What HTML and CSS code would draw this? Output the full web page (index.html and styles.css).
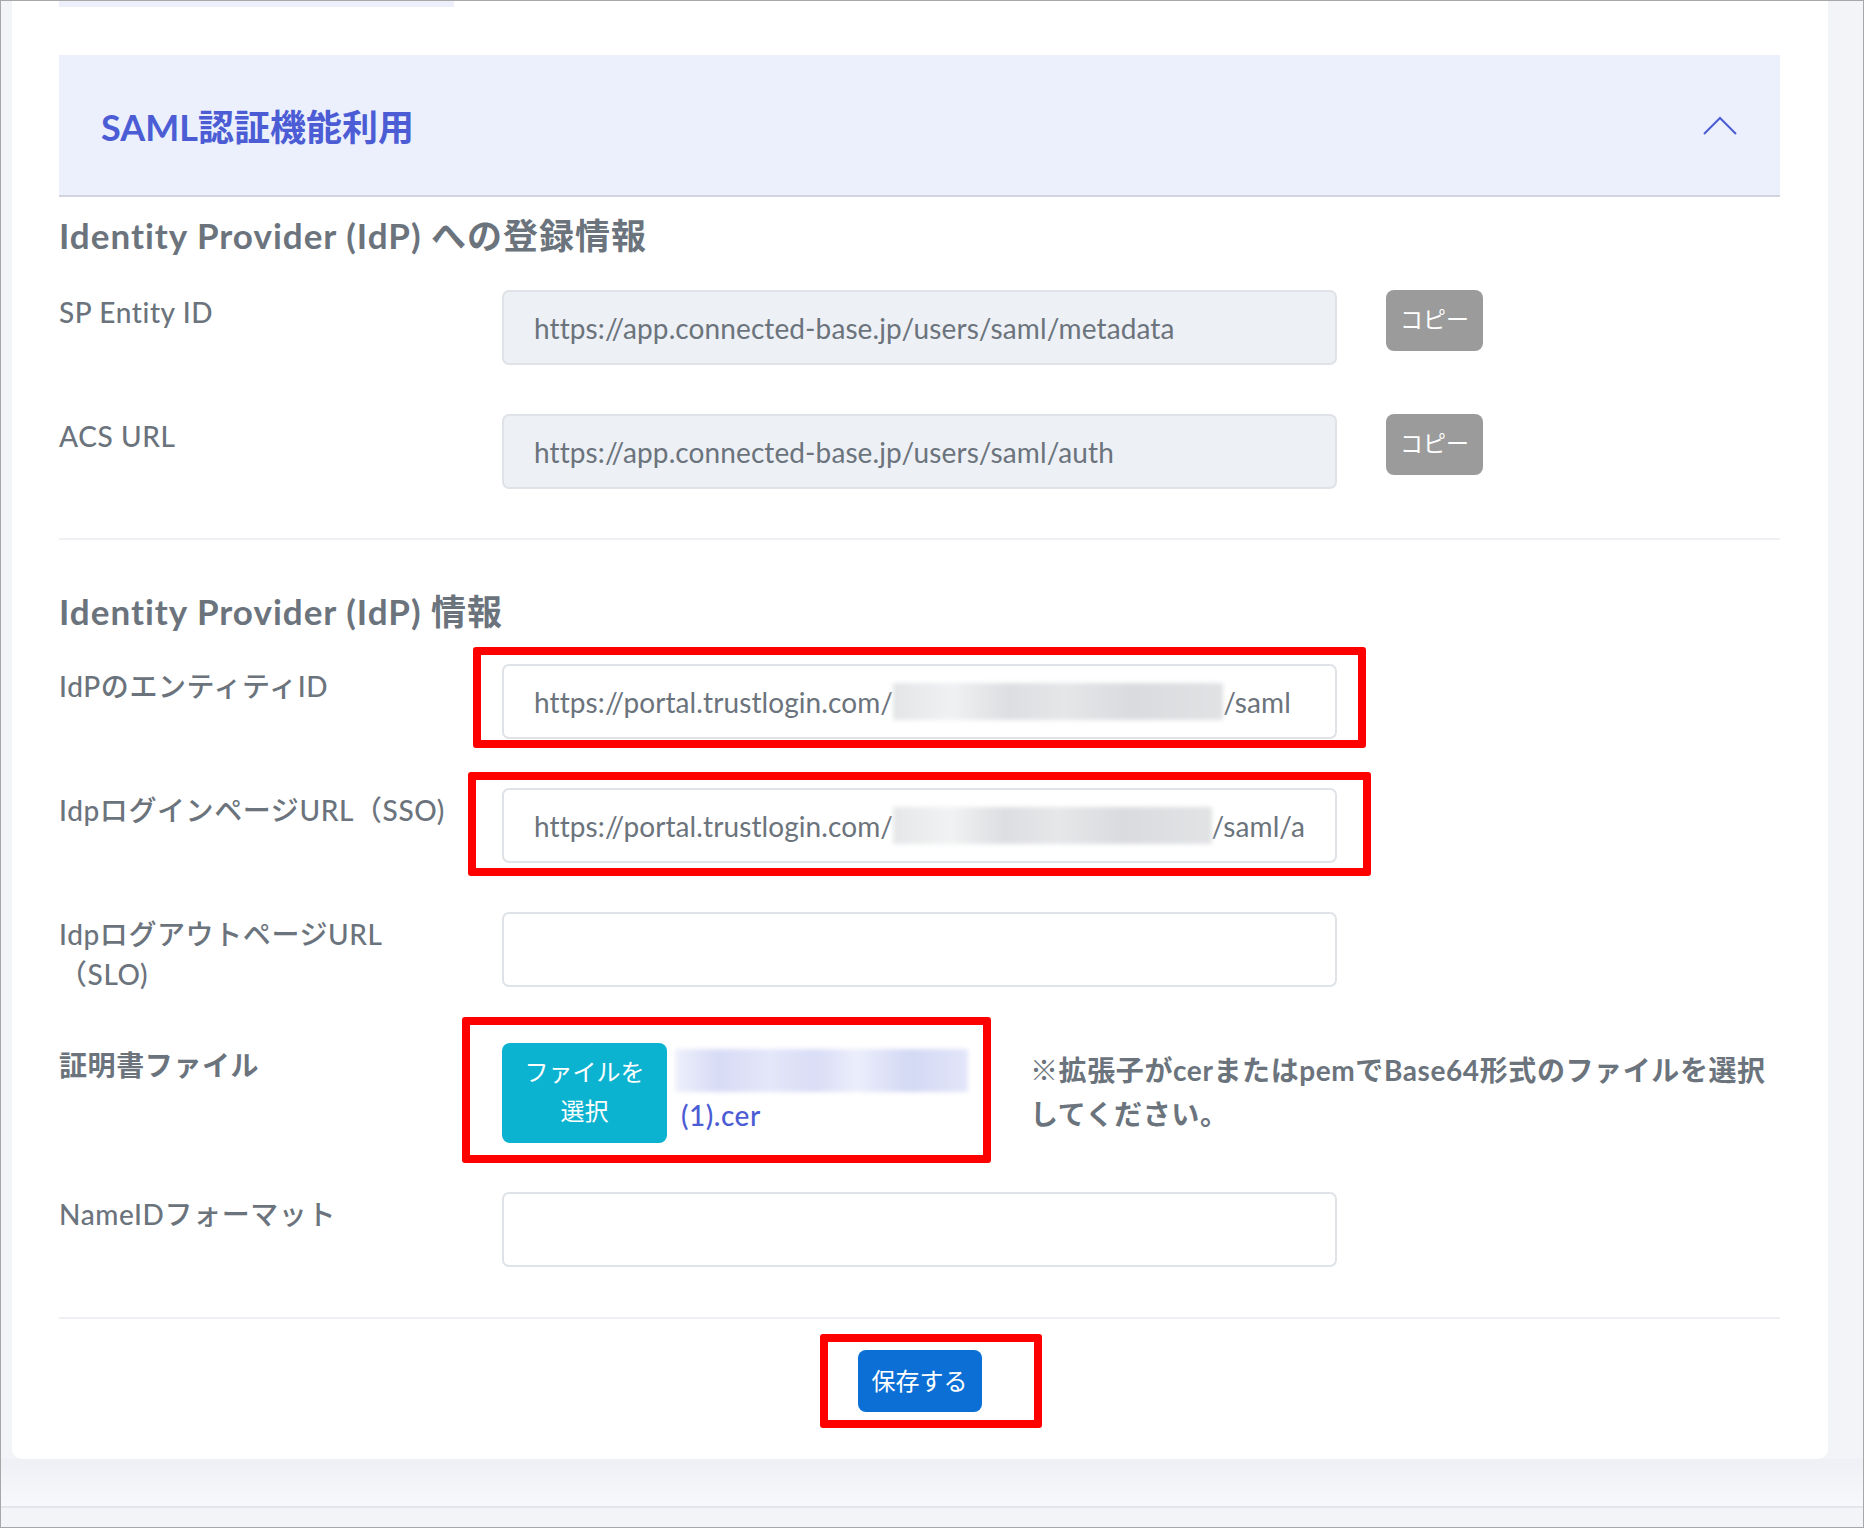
FILE: index.html
```html
<!DOCTYPE html>
<html lang="ja">
<head>
  <meta charset="UTF-8">
  <meta name="viewport" content="width=device-width, initial-scale=1.0">
  <title>SAML認証設定</title>
  <link rel="stylesheet" href="styles.css">
</head>
<body>
  <div class="window">
    <div class="card">
      <div class="tab-strip"></div>

      <!-- SAML設定パネル -->
      <div class="panel-header">
        <h2>SAML認証機能利用</h2>
        <svg class="chevron" width="36" height="20" viewBox="0 0 36 20">
          <polyline points="2,18 18,2 34,18" fill="none" stroke="#4b5cd5" stroke-width="2"/>
        </svg>
      </div>

      <h3 class="section-title">Identity Provider (IdP) への登録情報</h3>

      <div class="form-row">
        <label>SP Entity ID</label>
        <div class="field readonly">https://app.connected-base.jp/users/saml/metadata</div>
        <button class="btn-copy">コピー</button>
      </div>

      <div class="form-row">
        <label>ACS URL</label>
        <div class="field readonly">https://app.connected-base.jp/users/saml/auth</div>
        <button class="btn-copy">コピー</button>
      </div>

      <hr>

      <h3 class="section-title second">Identity Provider (IdP) 情報</h3>

      <div class="form-row">
        <label>IdPのエンティティID</label>
        <div class="field-wrap">
          <div class="field">https://portal.trustlogin.com/<span class="masked m1"></span>/saml</div>
          <div class="mark mark-entity"></div>
        </div>
      </div>

      <div class="form-row">
        <label>IdpログインページURL（SSO)</label>
        <div class="field-wrap">
          <div class="field">https://portal.trustlogin.com/<span class="masked m2"></span>/saml/a</div>
          <div class="mark mark-sso"></div>
        </div>
      </div>

      <div class="form-row">
        <label>IdpログアウトページURL（SLO)</label>
        <div class="field"></div>
      </div>

      <div class="form-row cert-row">
        <label class="strong">証明書ファイル</label>
        <div class="file-wrap">
          <button class="btn-file">ファイルを選択</button>
          <div class="file-name"><span class="masked m3"></span>(1).cer</div>
          <div class="mark mark-file"></div>
        </div>
        <p class="help">※拡張子がcerまたはpemでBase64形式のファイルを選択してください。</p>
      </div>

      <div class="form-row">
        <label>NameIDフォーマット</label>
        <div class="field"></div>
      </div>

      <hr class="bottom">

      <div class="actions">
        <div class="save-wrap">
          <button class="btn-save">保存する</button>
          <div class="mark mark-save"></div>
        </div>
      </div>
    </div>

    <div class="page-footer"></div>
  </div>
</body>
</html>
```

FILE: styles.css
```css
body {
  margin: 0;
  font-family: "Lato", "Noto Sans CJK JP", sans-serif;
  color: #6b737c;
}

.window {
  width: 1864px;
  height: 1528px;
  box-sizing: border-box;
  border: 1px solid #a7a7a7;
  background: #f3f4f8;
  overflow: hidden;
}

.card {
  margin-left: 11px;
  width: 1816px;
  box-sizing: border-box;
  padding: 0 48px 47px 47px;
  background: #fff;
  border-radius: 0 0 10px 10px;
}

.tab-strip {
  width: 395px;
  height: 6px;
  background: #edf0fb;
}

.panel-header {
  margin-top: 48px;
  height: 140px;
  padding: 0 42px;
  display: flex;
  align-items: center;
  justify-content: space-between;
  background: #ecf0fc;
  border-bottom: 2px solid #d2d3df;
}

.panel-header h2 {
  margin: 0;
  font-size: 36px;
  font-weight: 700;
  color: #4b5cd5;
}

.chevron {
  margin-top: 2px;
}

.section-title {
  margin: 18px 0 35px;
  font-size: 35px;
  line-height: 40px;
  letter-spacing: 1px;
  font-weight: 700;
  color: #6b737c;
}

.section-title.second {
  margin-top: 51px;
  margin-bottom: 33px;
}

.form-row {
  display: grid;
  grid-template-columns: 405px 835px 97px;
  column-gap: 38px;
  align-items: start;
  margin-bottom: 49px;
}

.form-row > :nth-child(3) {
  margin-left: 11px;
}

.form-row label {
  padding-top: 2px;
  font-size: 28px;
  line-height: 40px;
  letter-spacing: 0.6px;
  font-weight: 500;
}

.form-row label.strong {
  font-weight: 700;
}

.field {
  height: 75px;
  box-sizing: border-box;
  padding: 0 30px;
  display: flex;
  align-items: center;
  font-size: 28px;
  letter-spacing: 0.1px;
  white-space: nowrap;
  overflow: hidden;
  background: #fff;
  border: 2px solid #dfe2e7;
  border-radius: 7px;
}

.field.readonly {
  background: #edf0f5;
}

.field-wrap,
.file-wrap,
.save-wrap {
  position: relative;
}

.masked {
  display: inline-block;
  height: 37px;
  filter: blur(2px);
}

.m1 {
  width: 330px;
  background: linear-gradient(90deg, #e4e5e7, #f0f1f2 18%, #dddee1 35%, #e5e6e8 52%, #dadbde 72%, #e1e2e4);
}

.m2 {
  width: 321px;
  background: linear-gradient(90deg, #e6e7e9, #f1f2f3 18%, #dddee1 35%, #e6e7e9 52%, #dadbde 72%, #e2e3e5);
}

.m3 {
  width: 293px;
  height: 43px;
  margin-left: -6px;
  vertical-align: top;
  background: linear-gradient(90deg, #eef0fb, #d7dbf5 15%, #e4e7f9 32%, #d9ddf6 48%, #eceefb 62%, #d3d8f4 80%, #e3e6f9);
}

/* 注釈の赤枠 */
.mark {
  position: absolute;
  border: 8px solid #ff0000;
  border-radius: 3px;
  pointer-events: none;
}

.mark-entity {
  top: -17px;
  left: -29px;
  right: -29px;
  bottom: -9px;
}

.mark-sso {
  top: -16px;
  left: -34px;
  right: -34px;
  bottom: -13px;
}

.mark-file {
  top: -26px;
  left: -40px;
  right: -16px;
  bottom: -20px;
}

.mark-save {
  top: -16px;
  left: -38px;
  right: -60px;
  bottom: -16px;
}

button {
  font-family: "Lato", "Noto Sans CJK JP", sans-serif;
  color: #fff;
  border: 0;
  cursor: pointer;
}

.btn-copy {
  width: 97px;
  height: 61px;
  padding: 0 0 6px;
  font-size: 23px;
  background: #9b9b9b;
  border-radius: 8px;
}

.cert-row {
  grid-template-columns: 405px 473px 1fr;
}

.cert-row > :nth-child(3) {
  margin-left: 17px;
}

.file-wrap {
  display: flex;
  gap: 14px;
}

.btn-file {
  flex: none;
  width: 165px;
  height: 100px;
  padding: 0 12px 4px;
  font-size: 24px;
  line-height: 39px;
  background: #0cb3d0;
  border-radius: 8px;
}

.file-name {
  padding-top: 6px;
  font-size: 28px;
  line-height: 44px;
  letter-spacing: 0.5px;
  font-weight: 500;
  color: #4b5cd5;
}

.help {
  margin: 0;
  padding-top: 5px;
  font-size: 28px;
  line-height: 44px;
  letter-spacing: 0.6px;
  font-weight: 700;
}

hr {
  margin: 48px 0 0;
  border: 0;
  border-top: 2px solid #eef0f4;
}

hr.bottom {
  margin-top: 50px;
}

.actions {
  display: flex;
  justify-content: center;
  padding-top: 31px;
}

.btn-save {
  width: 124px;
  height: 62px;
  padding: 0 0 4px;
  font-size: 24px;
  background: #0b6fd5;
  border-radius: 8px;
}

.page-footer {
  height: 47px;
  background: linear-gradient(#eef0f5, #f7f8fb);
  border-bottom: 2px solid #e3e5ea;
}
```
